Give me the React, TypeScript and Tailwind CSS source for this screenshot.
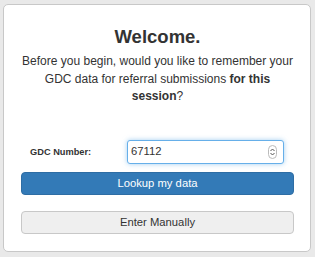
import { useState } from "react";

const App = () => {
  const [gdc, setGdc] = useState("67112");
  return (
    <div
      className="w-[315px] h-[257px] bg-[#e9e9e9] pt-[4px] pl-[3px]"
      style={{ fontFamily: '"Liberation Sans", Arial, sans-serif' }}
    >
      <div className="w-[308px] h-[248px] bg-white border border-[#c8c8c8] rounded-[5px] flex flex-col pl-[17px] pr-[16px]">
        {/* Heading */}
        <h1 className="mt-[21px] text-center text-[18.5px] leading-[22px] font-bold text-[#333]">
          Welcome.
        </h1>
        <p className="mt-[5px] -mx-[4px] text-center text-[12px] leading-[17.5px] text-[#333]">
          Before you begin, would you like to remember your
          <br />
          GDC data for referral submissions <b>for this</b>
          <br />
          <b>session</b>?
        </p>

        {/* GDC number row */}
        <div className="mt-[34px] flex items-center h-[24px]">
          <label className="ml-[9px] w-[97px] shrink-0 text-[9.25px] font-bold text-[#333] pt-[3px]">
            GDC Number:
          </label>
          <div className="flex-1 min-w-0 mr-[10px] h-[24px] flex items-center border border-[#66afe9] rounded-[3px] shadow-[0_0_5px_rgba(102,175,233,0.6)] bg-white">
            <input
              value={gdc}
              onChange={(e) => setGdc(e.target.value)}
              className="flex-1 w-0 min-w-0 pl-[3px] text-[11.25px] text-[#333] outline-none bg-transparent"
            />
            <div className="mr-[6px] w-[9px] h-[14px] shrink-0 rounded-full border border-[#bbb] flex flex-col items-center justify-center text-[#555]">
              <svg width="5" height="4" viewBox="0 0 5 4" fill="none" stroke="currentColor" strokeWidth="1">
                <path d="M0.5 3 L2.5 1 L4.5 3" />
              </svg>
              <svg width="5" height="4" viewBox="0 0 5 4" fill="none" stroke="currentColor" strokeWidth="1">
                <path d="M0.5 1 L2.5 3 L4.5 1" />
              </svg>
            </div>
          </div>
        </div>

        {/* Actions */}
        <button className="mt-[8px] h-[23px] w-full shrink-0 rounded-[4px] bg-[#337ab7] border border-[#2e6da4] text-white text-[11.25px]">
          Lookup my data
        </button>
        <button className="mt-[16px] h-[23px] w-full shrink-0 rounded-[4px] bg-[#efefef] border border-[#c8c8c8] text-[#333] text-[11.25px]">
          Enter Manually
        </button>
      </div>
    </div>
  );
};

export default App;
